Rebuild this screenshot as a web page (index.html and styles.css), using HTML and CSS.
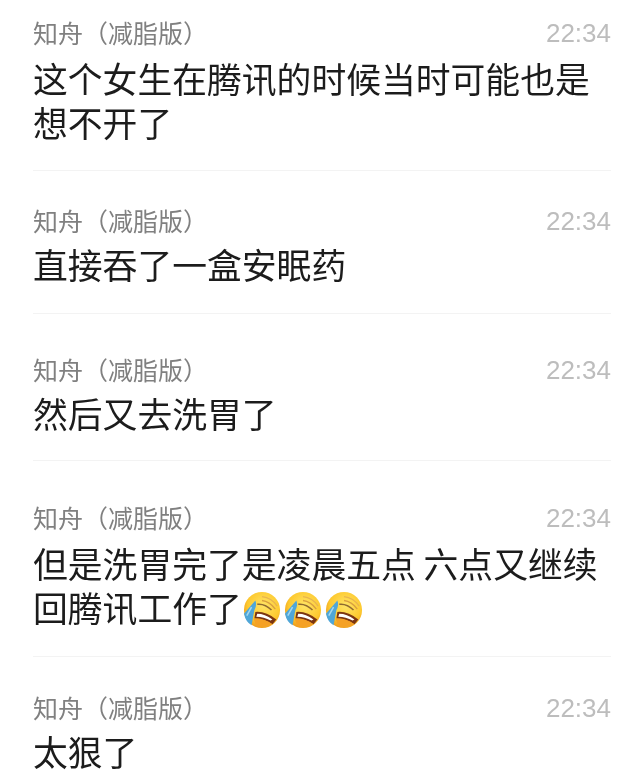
FILE: index.html
```html
<!DOCTYPE html>
<html lang="zh-CN">

<head>
    <meta charset="UTF-8">
    <title>聊天记录</title>
    <link rel="stylesheet" href="styles.css">
</head>

<body>
    <svg class="defs" width="0" height="0">
        <defs>
            <radialGradient id="face" cx="55%" cy="38%" r="62%">
                <stop offset="0%" stop-color="#ffe566" />
                <stop offset="72%" stop-color="#fdc92f" />
                <stop offset="100%" stop-color="#ee9d1e" />
            </radialGradient>
            <symbol id="cry" viewBox="0 0 40 40">
                <circle cx="20" cy="20" r="19" fill="url(#face)" />
                <path d="M20 6 Q30 7 36 16" fill="none" stroke="#e8b450" stroke-width="1.4" />
                <path d="M20 10 Q28 11 34 19" fill="none" stroke="#d9a040" stroke-width="1.4" />
                <path d="M15 14 Q23 13 30 20" fill="none" stroke="#8f6a30" stroke-width="1.6" />
                <path d="M13 22 Q24 21 35 30 L31 35 Q22 29 12 29Z" fill="#7a3512" />
                <path d="M15 24 Q23 24 31 30 L29 31 Q22 27 14 27Z" fill="#fff" />
                <path d="M11 29 Q22 28 31 35 Q22 39 14 37Z" fill="#f5a125" />
                <path d="M13 10 Q15 15 12 20 L9 36 Q3 33 1 24Z" fill="#4fa6d8" />
                <path d="M9 17 L4 26" stroke="#a5d8ef" stroke-width="1.6" />
            </symbol>
        </defs>
    </svg>

    <div class="chat-list">
        <div class="chat-item chat-item-1">
            <div class="chat-head">
                <span class="chat-name">知舟（减脂版）</span>
                <span class="chat-time">22:34</span>
            </div>
            <p class="chat-text">这个女生在腾讯的时候当时可能也是<br>想不开了</p>
        </div>
        <div class="chat-item chat-item-2">
            <div class="chat-head">
                <span class="chat-name">知舟（减脂版）</span>
                <span class="chat-time">22:34</span>
            </div>
            <p class="chat-text">直接吞了一盒安眠药</p>
        </div>
        <div class="chat-item chat-item-3">
            <div class="chat-head">
                <span class="chat-name">知舟（减脂版）</span>
                <span class="chat-time">22:34</span>
            </div>
            <p class="chat-text">然后又去洗胃了</p>
        </div>
        <div class="chat-item chat-item-4">
            <div class="chat-head">
                <span class="chat-name">知舟（减脂版）</span>
                <span class="chat-time">22:34</span>
            </div>
            <p class="chat-text">但是洗胃完了是凌晨五点 六点又继续<br>回腾讯工作了<span class="emoji-row"><svg class="emoji"><use href="#cry" /></svg><svg class="emoji"><use href="#cry" /></svg><svg class="emoji"><use href="#cry" /></svg></span></p>
        </div>
        <div class="chat-item chat-item-5">
            <div class="chat-head">
                <span class="chat-name">知舟（减脂版）</span>
                <span class="chat-time">22:34</span>
            </div>
            <p class="chat-text">太狠了</p>
        </div>
    </div>
</body>

</html>
```

FILE: styles.css
```css
* {
    margin: 0;
    padding: 0;
    box-sizing: border-box;
}

body {
    background: #fff;
    font-family: "Noto Sans CJK SC", "Liberation Sans", sans-serif;
    height: 778px;
    overflow: hidden;
}

.defs {
    display: block;
    height: 0;
}

.chat-list {
    padding: 15px 29px 0 33px;
    filter: blur(0.4px);
}

.chat-item {
    border-bottom: 1px solid #f3f3f3;
}

/* rows are not evenly spaced in the original */
.chat-item-1 {
    padding-bottom: 26px;
    margin-bottom: 32px;
}

.chat-item-2 {
    padding-bottom: 27px;
    margin-bottom: 38px;
}

.chat-item-3 {
    padding-bottom: 25px;
    margin-bottom: 39px;
}

.chat-item-4 {
    padding-bottom: 27px;
    margin-bottom: 33px;
}

.chat-item-5 {
    border-bottom: none;
}

.chat-head {
    display: flex;
    justify-content: space-between;
    align-items: center;
    height: 34px;
}

.chat-name {
    font-size: 25px;
    color: #808080;
}

.chat-time {
    font-family: "Liberation Sans", sans-serif;
    font-size: 26px;
    color: #bdbdbd;
    margin-top: 2px;
}

.chat-text {
    font-size: 34.8px;
    line-height: 44px;
    color: #1c1c1c;
    margin-top: 5px;
}

.chat-item-1 .chat-text,
.chat-item-4 .chat-text {
    margin-top: 7px;
}

.emoji-row {
    display: inline-flex;
    vertical-align: -7px;
    gap: 3px;
    margin-left: 1px;
}

.emoji {
    width: 38px;
    height: 38px;
}
```
